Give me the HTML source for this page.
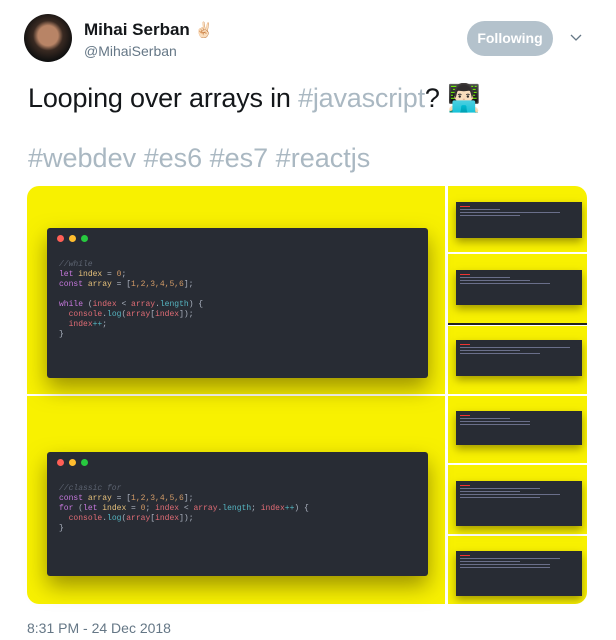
<!DOCTYPE html>
<html><head><style>
body{margin:0;width:616px;height:640px;background:#fff;font-family:"Liberation Sans",sans-serif;position:relative;overflow:hidden}
.abs{position:absolute}
.card{position:absolute;background:#282c34;border-radius:3px;box-shadow:0 10px 22px rgba(80,70,0,.55);font-family:"Liberation Mono",monospace;color:#abb2bf}
.dots span{display:inline-block;border-radius:50%;margin-right:5px}
.k{color:#c678dd}.v{color:#e5c07b}.n{color:#d19a66}.c{color:#5c6370;font-style:italic}.r{color:#e06c75}.f{color:#56b6c2}
.mini{position:absolute;left:8px;right:6px;background:#282c34;box-shadow:0 4px 8px rgba(80,70,0,.5)}
.mini i{display:block;height:1px;margin:2px 0 0 4px;background:#6a6f8a}
</style></head><body>
<div class="abs" style="left:24px;top:14px;width:48px;height:48px;border-radius:50%;background:radial-gradient(circle at 50% 45%,#b88466 0 28%,#3a2a22 42%,#111 70%)"></div>
<div class="abs" style="left:84px;top:20px;font-size:17px;font-weight:bold;color:#14171a">Mihai Serban <span style="font-size:15px">✌🏻</span></div>
<div class="abs" style="left:84px;top:43px;font-size:14px;color:#657786">@MihaiSerban</div>
<div class="abs" style="left:467px;top:21px;width:86px;height:35px;border-radius:18px;background:#b4c2cc;color:#fff;font-weight:bold;font-size:14px;text-align:center;line-height:35px">Following</div>
<svg class="abs" style="left:570px;top:34px" width="12" height="8"><path d="M1 1l5 5 5-5" stroke="#657786" stroke-width="1.3" fill="none"/></svg>
<div class="abs" style="left:28px;top:82px;font-size:27px;color:#14171a;letter-spacing:-0.2px">Looping over arrays in <span style="color:#aab8c2">#javascript</span>? 👨🏻‍💻</div>
<div class="abs" style="left:28px;top:143px;font-size:27px;color:#aab8c2">#webdev #es6 #es7 #reactjs</div>

<div class="abs" style="left:27px;top:186px;width:560px;height:418px;border-radius:12px;overflow:hidden;background:#fff">
 <div class="abs" style="left:0;top:0;width:418px;height:208px;background:#f8f100"></div>
 <div class="abs" style="left:0;top:210px;width:418px;height:208px;background:#f8f100"></div>
 <div class="abs" style="left:421px;top:0;width:139px;height:66px;background:#f8f100"></div>
 <div class="abs" style="left:421px;top:68px;width:139px;height:70px;background:#f8f100"></div>
 <div class="abs" style="left:421px;top:140px;width:139px;height:68px;background:#f8f100"></div>
 <div class="abs" style="left:421px;top:210px;width:139px;height:67px;background:#f8f100"></div>
 <div class="abs" style="left:421px;top:279px;width:139px;height:69px;background:#f8f100"></div>
 <div class="abs" style="left:421px;top:350px;width:139px;height:68px;background:#f8f100"></div>
 <div class="abs" style="left:421px;top:137px;width:139px;height:2px;background:#222"></div>
 <div class="mini" style="left:429px;width:126px;top:16px;height:36px"><i style="width:10px;background:#e33;margin-top:4px"></i><i style="width:40px"></i><i style="width:100px"></i><i style="width:60px"></i></div>
 <div class="mini" style="left:429px;width:126px;top:84px;height:35px"><i style="width:10px;background:#e33;margin-top:4px"></i><i style="width:50px"></i><i style="width:70px"></i><i style="width:90px"></i></div>
 <div class="mini" style="left:429px;width:126px;top:154px;height:36px"><i style="width:10px;background:#e33;margin-top:4px"></i><i style="width:110px"></i><i style="width:60px"></i><i style="width:80px"></i></div>
 <div class="mini" style="left:429px;width:126px;top:225px;height:34px"><i style="width:10px;background:#e33;margin-top:4px"></i><i style="width:50px"></i><i style="width:70px"></i><i style="width:70px"></i></div>
 <div class="mini" style="left:429px;width:126px;top:295px;height:45px"><i style="width:10px;background:#e33;margin-top:4px"></i><i style="width:80px"></i><i style="width:60px"></i><i style="width:100px"></i><i style="width:80px"></i></div>
 <div class="mini" style="left:429px;width:126px;top:365px;height:45px"><i style="width:10px;background:#e33;margin-top:4px"></i><i style="width:100px"></i><i style="width:60px"></i><i style="width:90px"></i><i style="width:90px"></i></div>
</div>

<div class="card" style="left:47px;top:228px;width:381px;height:150px;font-size:8px;line-height:10px">
 <div class="dots" style="padding:7px 0 0 10px"><span style="width:7px;height:7px;background:#ff5f56"></span><span style="width:7px;height:7px;background:#ffbd2e"></span><span style="width:7px;height:7px;background:#27c93f"></span></div>
 <div style="padding:14px 0 0 12px;white-space:pre"><span class="c">//while</span>
<span class="k">let</span> <span class="v">index</span> = <span class="n">0</span>;
<span class="k">const</span> <span class="v">array</span> = [<span class="n">1,2,3,4,5,6</span>];

<span class="k">while</span> (<span class="r">index</span> &lt; <span class="r">array</span>.<span class="f">length</span>) {
  <span class="r">console</span>.<span class="f">log</span>(<span class="r">array</span>[<span class="r">index</span>]);
  <span class="r">index</span><span class="f">++</span>;
}</div>
</div>

<div class="card" style="left:47px;top:452px;width:381px;height:124px;font-size:8px;line-height:10px">
 <div class="dots" style="padding:7px 0 0 10px"><span style="width:7px;height:7px;background:#ff5f56"></span><span style="width:7px;height:7px;background:#ffbd2e"></span><span style="width:7px;height:7px;background:#27c93f"></span></div>
 <div style="padding:14px 0 0 12px;white-space:pre"><span class="c">//classic for</span>
<span class="k">const</span> <span class="v">array</span> = [<span class="n">1,2,3,4,5,6</span>];
<span class="k">for</span> (<span class="k">let</span> <span class="v">index</span> = <span class="n">0</span>; <span class="r">index</span> &lt; <span class="r">array</span>.<span class="f">length</span>; <span class="r">index</span><span class="f">++</span>) {
  <span class="r">console</span>.<span class="f">log</span>(<span class="r">array</span>[<span class="r">index</span>]);
}</div>
</div>

<div class="abs" style="left:27px;top:620px;font-size:14px;color:#657786">8:31 PM - 24 Dec 2018</div>
</body></html>
